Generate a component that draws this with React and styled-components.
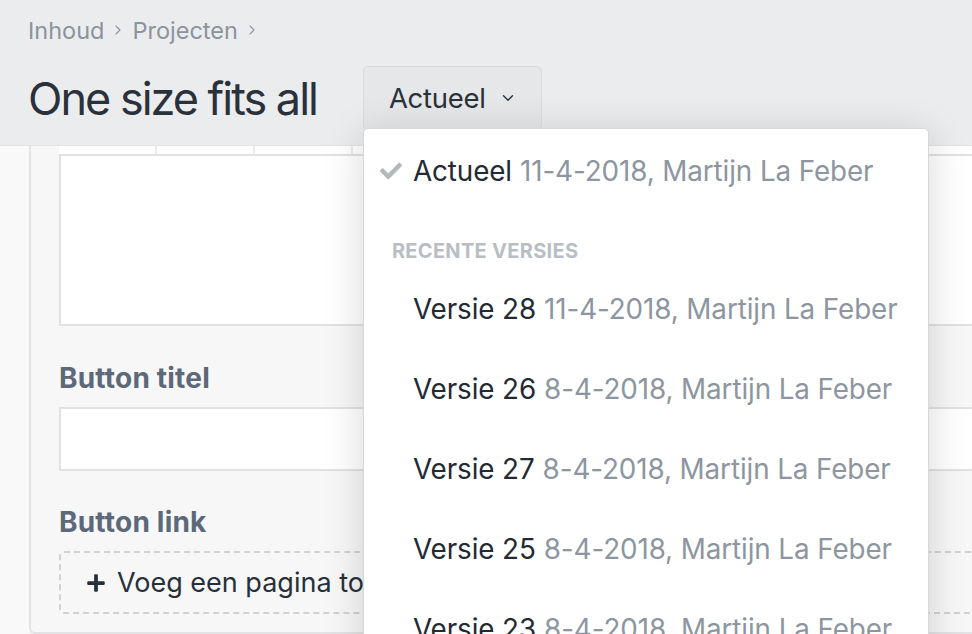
import React from "react";
import styled, { createGlobalStyle } from "styled-components";
import { FaCheck, FaPlus } from "react-icons/fa";
import { ChevronDown, ChevronRight } from "lucide-react";

const GlobalStyle = createGlobalStyle`
  html, body {
    margin: 0;
    padding: 0;
    background: #f9f9f9;
    font-family: "Inter", "Liberation Sans", sans-serif;
    overflow: hidden;
  }
  * { box-sizing: border-box; }
`;

const StyledPage = styled.div`
  width: 972px;
  height: 634px;
  overflow: hidden;
  position: relative;
`;

const StyledHeader = styled.header`
  position: relative;
  z-index: 2;
  height: 146px;
  background: #ebecee;
  border-bottom: 1px solid #e2e3e5;
  padding: 14px 28px 0;
`;

const StyledCrumbs = styled.nav`
  display: flex;
  align-items: center;
  gap: 6px;
  font-size: 23.5px;
  color: #8b939c;
  height: 32px;
`;

const StyledTitleRow = styled.div`
  display: flex;
  align-items: center;
  gap: 46px;
  margin-top: 20px;
`;

const StyledTitle = styled.h1`
  margin: 0;
  font-weight: 400;
  font-size: 45px;
  letter-spacing: -2px;
  color: #2a313b;
`;

const StyledMenu = styled.div`
  position: relative;
`;

const StyledButton = styled.button`
  display: flex;
  align-items: center;
  gap: 13px;
  height: 64px;
  padding: 0 24px 0 25px;
  background: #e6e7e9;
  border: 1px solid #dadbde;
  border-radius: 5px;
  font-family: inherit;
  font-size: 27.5px;
  color: #2a313b;
  letter-spacing: -0.3px;
`;

const StyledDropdown = styled.div`
  position: absolute;
  top: 62px;
  left: 0;
  width: 566px;
  height: 560px;
  background: #fff;
  border: 1px solid #d6d7da;
  border-radius: 5px;
  box-shadow: 0 6px 40px rgba(0, 0, 0, 0.16);
  overflow: hidden;
`;

const StyledItem = styled.div`
  display: flex;
  align-items: center;
  height: 80px;
  padding: 3px 0 0 16px;
  font-size: 27.8px;
  letter-spacing: -0.1px;
  white-space: nowrap;
  color: #232a33;
`;

const StyledIconSlot = styled.span`
  display: flex;
  align-items: center;
  width: 33px;
  color: #b3b8be;
`;

const StyledMeta = styled.span`
  color: #8d96a0;
  margin-left: 8px;
`;

const StyledSection = styled.div`
  padding: 32px 0 6px 28px;
  line-height: 20px;
  font-size: 20px;
  font-weight: 700;
  letter-spacing: 0.3px;
  text-transform: uppercase;
  color: #b9bec5;
`;

const StyledContent = styled.main`
  padding-left: 29px;
`;

const StyledCard = styled.section`
  height: 488px;
  background: #f7f7f7;
  border-left: 2px solid #e3e3e5;
  border-bottom: 2px solid #e3e3e5;
  border-bottom-left-radius: 6px;
  padding-left: 28px;
`;

const StyledToolbar = styled.div`
  display: flex;
  height: 10px;
  background: #fff;
  border-bottom: 2px solid #e1e1e3;
`;

const StyledToolCell = styled.div`
  width: 98px;
  border-right: 2px solid #ececee;
`;

const StyledEditor = styled.div`
  height: 170px;
  background: #fff;
  border: 2px solid #e1e1e3;
  border-top: none;
  border-right: none;
`;

const StyledLabel = styled.div`
  font-weight: 700;
  font-size: 28px;
  letter-spacing: 0.2px;
  color: #5b6979;
  margin: ${(p) => p.$top}px 0 14px;
  line-height: 30px;
`;

const StyledInput = styled.div`
  height: 64px;
  background: #fff;
  border: 2px solid #e1e1e3;
  border-right: none;
`;

const StyledAdd = styled.div`
  display: flex;
  align-items: center;
  gap: 11px;
  height: 63px;
  padding-left: 25px;
  border: 2px dashed #d2d2d4;
  border-right: none;
  border-radius: 5px 0 0 5px;
  font-size: 27px;
  color: #27303a;
  white-space: nowrap;
`;

const versions = [
  ["Versie 28", "11-4-2018, Martijn La Feber"],
  ["Versie 26", "8-4-2018, Martijn La Feber"],
  ["Versie 27", "8-4-2018, Martijn La Feber"],
  ["Versie 25", "8-4-2018, Martijn La Feber"],
  ["Versie 23", "8-4-2018, Martijn La Feber"],
];

const App = () => {
  return (
    <StyledPage>
      <GlobalStyle />
      <StyledHeader>
        <StyledCrumbs>
          Inhoud <ChevronRight size={16} strokeWidth={1.6} /> Projecten{" "}
          <ChevronRight size={16} strokeWidth={1.6} />
        </StyledCrumbs>
        <StyledTitleRow>
          <StyledTitle>One size fits all</StyledTitle>
          <StyledMenu>
            <StyledButton>
              Actueel <ChevronDown size={18} strokeWidth={1.8} />
            </StyledButton>
            <StyledDropdown>
              <StyledItem>
                <StyledIconSlot>
                  <FaCheck size={22} />
                </StyledIconSlot>
                Actueel
                <StyledMeta>11-4-2018, Martijn La Feber</StyledMeta>
              </StyledItem>
              <StyledSection>Recente versies</StyledSection>
              {versions.map(([name, meta]) => (
                <StyledItem key={name}>
                  <StyledIconSlot />
                  {name}
                  <StyledMeta>{meta}</StyledMeta>
                </StyledItem>
              ))}
            </StyledDropdown>
          </StyledMenu>
        </StyledTitleRow>
      </StyledHeader>

      <StyledContent>
        <StyledCard>
          <StyledToolbar>
            <StyledToolCell />
            <StyledToolCell />
            <StyledToolCell />
          </StyledToolbar>
          <StyledEditor />
          <StyledLabel $top={37}>Button titel</StyledLabel>
          <StyledInput />
          <StyledLabel $top={36}>Button link</StyledLabel>
          <StyledAdd>
            <FaPlus size={20} /> Voeg een pagina toe
          </StyledAdd>
        </StyledCard>
      </StyledContent>
    </StyledPage>
  );
};

export default App;
